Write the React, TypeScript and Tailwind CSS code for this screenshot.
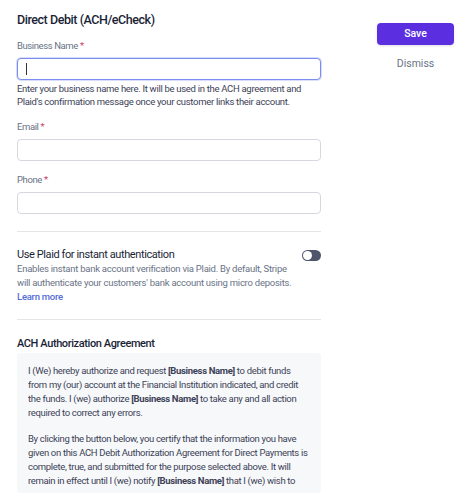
import React from "react";

const Label = ({ children }: { children: React.ReactNode }) => (
  <label className="block text-[9.5px] tracking-[-0.4px] text-[#697386] mb-[5px] leading-[14px]">
    {children} <span className="text-[#cd3d64]">*</span>
  </label>
);

const Field = ({ label, focused }: { label: string; focused?: boolean }) => (
  <div>
    <Label>{label}</Label>
    <div
      className={`h-[22px] rounded-[4px] border bg-white flex items-center px-[8px] ${
        focused ? "border-[#7b8ef0] shadow-[0_0_0_1px_rgba(123,142,240,0.3)]" : "border-[#d5d8de]"
      }`}
    >
      {focused && <span className="w-px h-[12px] bg-[#333]" />}
    </div>
  </div>
);

export default function App() {
  return (
    <div
      className="w-[474px] h-[500px] overflow-hidden bg-white flex text-[#3c4257]"
      style={{ fontFamily: "Roboto, 'Liberation Sans', sans-serif" }}
    >
      <div className="w-[304px] ml-[17px] pt-[10px] shrink-0">
        <h1 className="text-[12.5px] font-medium tracking-[-0.45px] text-[#1a1f36] leading-[20px]">
          Direct Debit (ACH/eCheck)
        </h1>

        <div className="mt-[9px]">
          <Field label="Business Name" focused />
        </div>
        <p className="text-[9.5px] leading-[13px] tracking-[-0.3px] text-[#3c4257] mt-[2px] whitespace-nowrap">
          Enter your business name here. It will be used in the ACH agreement and
          <br />
          Plaid's confirmation message once your customer links their account.
        </p>

        <div className="mt-[12px]">
          <Field label="Email" />
        </div>
        <div className="mt-[12px]">
          <Field label="Phone" />
        </div>

        <div className="border-t border-[#e3e5e8] mt-[17px]" />

        <div className="pt-[16px] pb-[15px]">
          <div className="flex items-center justify-between">
            <span className="text-[11px] tracking-[-0.4px] text-[#1a1f36] leading-[14px]">
              Use Plaid for instant authentication
            </span>
            <span className="w-[19px] h-[11px] rounded-full bg-[#4f566b] relative flex items-center">
              <span className="absolute left-[1px] w-[9px] h-[9px] rounded-full bg-white" />
            </span>
          </div>
          <p className="text-[9.5px] leading-[14px] tracking-[-0.25px] text-[#697386] whitespace-nowrap">
            Enables instant bank account verification via Plaid. By default, Stripe
            <br />
            will authenticate your customers' bank account using micro deposits.
          </p>
          <a className="block text-[9.5px] leading-[14px] tracking-[-0.25px] text-[#556cd6] font-medium">
            Learn more
          </a>
        </div>

        <div className="border-t border-[#e3e5e8]" />

        <h2 className="text-[11px] font-medium tracking-[-0.4px] text-[#1a1f36] mt-[16px] leading-[16px]">
          ACH Authorization Agreement
        </h2>
        <div className="mt-[1px] h-[140px] bg-[#f6f8fa] rounded-[3px] pl-[11px] pr-[8px] pt-[11px] text-[9.5px] leading-[14px] tracking-[-0.33px] text-[#3c4257] whitespace-nowrap">
          <div className="h-[125px] overflow-hidden">
            <p>
              I (We) hereby authorize and request <b className="font-bold">[Business Name]</b> to
              debit funds
              <br />
              from my (our) account at the Financial Institution indicated, and credit
              <br />
              the funds. I (we) authorize <b className="font-bold">[Business Name]</b> to take any
              and all action
              <br />
              required to correct any errors.
            </p>
            <p className="mt-[12px]">
              By clicking the button below, you certify that the information you have
              <br />
              given on this ACH Debit Authorization Agreement for Direct Payments is
              <br />
              complete, true, and submitted for the purpose selected above. It will
              <br />
              remain in effect until I (we) notify <b className="font-bold">[Business Name]</b> that
              I (we) wish to
              <br />
              revoke this authorization.
            </p>
          </div>
        </div>
      </div>

      <div className="ml-[56px] pt-[23px] w-[77px] flex flex-col items-center">
        <button className="w-[77px] h-[22px] rounded-[4px] bg-[#5b2fe0] text-white text-[10.5px] font-medium shadow-sm">
          Save
        </button>
        <span className="mt-[12px] text-[10.5px] leading-[14px] text-[#697386]">Dismiss</span>
      </div>
    </div>
  );
}
